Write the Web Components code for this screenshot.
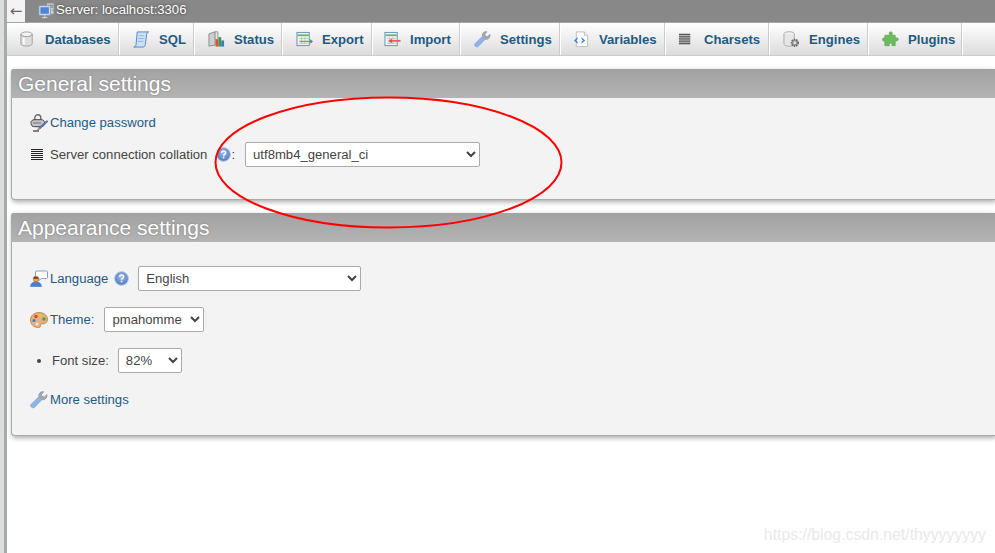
<!DOCTYPE html>
<html>
<head>
<meta charset="utf-8">
<title>phpMyAdmin</title>
<style>
html, body { margin: 0; height: 100%; background: #fff; overflow: hidden; }
body { font-family: "Liberation Sans", Arial, sans-serif; }
</style>
</head>
<body>

<pma-app>
  <pma-topbar slot="top" label="Server: localhost:3306"></pma-topbar>
  <pma-tabs slot="top">
    <pma-tab icon="db" w="113" style="padding-left:12px">Databases</pma-tab>
    <pma-tab icon="sql" w="75">SQL</pma-tab>
    <pma-tab icon="status" w="88">Status</pma-tab>
    <pma-tab icon="export" w="90">Export</pma-tab>
    <pma-tab icon="import" w="88" style="padding-left:11px">Import</pma-tab>
    <pma-tab icon="wrench" w="100">Settings</pma-tab>
    <pma-tab icon="vars" w="105" style="padding-left:12px">Variables</pma-tab>
    <pma-tab icon="charset" w="104" style="padding-left:12px">Charsets</pma-tab>
    <pma-tab icon="engine" w="99">Engines</pma-tab>
    <pma-tab icon="plugin" w="94">Plugins</pma-tab>
  </pma-tabs>

  <pma-panel title="General settings" h="131" pad="12">
    <pma-row icon="lock" link>Change password</pma-row>
    <pma-row icon="charset" gap="7">
      Server connection collation
      <pma-help slot="after" style="margin-left:9px;margin-right:1px"></pma-help>
      <span slot="after" class="colon">:</span>
      <pma-select slot="after" w="235" value="utf8mb4_general_ci"></pma-select>
    </pma-row>
  </pma-panel>

  <pma-panel title="Appearance settings" h="223" pad="24">
    <pma-row icon="lang" link>
      Language
      <pma-help slot="after"></pma-help>
      <pma-select slot="after" w="223" value="English"></pma-select>
    </pma-row>
    <pma-row icon="theme" link gap="16">
      Theme:
      <pma-select slot="after" w="100" value="pmahomme"></pma-select>
    </pma-row>
    <pma-row bullet gap="16">
      Font size:
      <pma-select slot="after" w="64" value="82%" style="margin-left:9px"></pma-select>
    </pma-row>
    <pma-row icon="wrench" link gap="14">More settings</pma-row>
  </pma-panel>

  <pma-annotation slot="over"></pma-annotation>
</pma-app>

<script>
const ICONS = {
  db: `<ellipse cx="8" cy="3.500" rx="6" ry="2.500" fill="#f2f2f2" stroke="#a0a0a0"/><path d="M2 3.500v10c0 1.500 2.600 2.500 6 2.500s6-1 6-2.500v-10c0 1.400-2.600 2.500-6 2.500S2 4.900 2 3.500z" fill="#dedede" stroke="#a0a0a0"/><path d="M5 7v7.500" stroke="#fff" stroke-width="2"/>`,
  sql: `<path d="M4.500 1h12c-1.200.3-1.800 1.200-2 2.500L13 14.500c-.2 1.500-1 2.500-2.500 2.500H.8c1.500-.3 2.200-1.200 2.400-2.500z" fill="#cfe0f5" stroke="#4d84c4"/><path d="M16.500 1c-1 0-2 .6-2.500 2.500M6 5h6M5.500 8h6M5 11h6" fill="none" stroke="#7fa6d6" stroke-width=".8"/>`,
  status: `<path d="M1 3l6.500-2.200V15L1 16z" fill="#cfcfcf" stroke="#8a8a8a"/><path d="M7.500 .8h3V9h-3z" fill="#e2e2e2" stroke="#999"/><rect x="8" y="9" width="3" height="7.500" fill="#e0503a"/><rect x="11" y="6.500" width="3" height="10" fill="#3f9b3f"/><rect x="14" y="10" width="3" height="6.500" fill="#3d78d0"/>`,
  export: `<rect x="1" y="1.500" width="13" height="14" fill="#eef5ea" stroke="#5f8fc6"/><path d="M1.500 4.500h12" stroke="#79b46a" stroke-width="2"/><path d="M3 8h10M3 10.500h10M3 13h10M6 6v8M9.500 6v8" stroke="#a7bfa0" stroke-width=".7"/><path d="M4 10.500h11V8.500l3 2.500-3 2.500v-2H4z" fill="#3f9b3f"/>`,
  import: `<rect x="1" y="1.500" width="13" height="14" fill="#f2f6fb" stroke="#5f8fc6"/><path d="M1.500 4.500h12" stroke="#79b46a" stroke-width="2"/><path d="M3 8h10M3 13h10M6 6v8M9.500 6v8" stroke="#a9b9c8" stroke-width=".7"/><path d="M17.500 9.500H8.500V8L4 10.500 8.500 13v-1.500h9z" fill="#e04a4a" stroke="#f6b3a9" stroke-width=".5"/>`,
  wrench: `<path d="M.8 13.500L9 5.500c-.6-2.300.9-4.800 3.600-4.800l1 .1-2.200 2.600.8 2.100 2.100.7L16.800 3.600c.6 3.100-1.700 5.600-4.800 5.100L4.500 16.500c-1.700 1.300-4.900-.8-3.700-3z" fill="#8fb2e8" stroke="#7d9ccf" stroke-width=".5"/><path d="M9 5.500c-.6-2.300.9-4.800 3.600-4.800l1 .1-2.200 2.600.8 2.100 2.100.7L16.800 3.600c.6 3.100-1.700 5.600-4.800 5.100z" fill="#a8a8a8" stroke="#919191" stroke-width=".4"/>`,
  vars: `<path d="M3.500 1h8.500l3.500 3.500v12h-12z" fill="#fff" stroke="#bbb"/><path d="M12 1v3.500h3.500" fill="#eee" stroke="#bbb"/><path d="M5 6.500L1 10l4 3.500v-2L3.200 10 5 8.500z" fill="#3d82e0"/><path d="M9 6.500L13 10l-4 3.500v-2L10.800 10 9 8.500z" fill="#3d82e0"/>`,
  charset: `<path d="M1 3.500h12M1 5.500h12M1 7.500h12M1 9.500h12M1 11.500h12M1 13.500h12" stroke="#222" stroke-width="1"/>`,
  engine: `<ellipse cx="6.500" cy="3.500" rx="5.500" ry="2.700" fill="#f2f2f2" stroke="#aaa"/><path d="M1 3.500v10c0 1.500 2.400 2.700 5.500 2.700s5.500-1.200 5.500-2.700v-10" fill="#e6e6e6" stroke="#aaa"/><circle cx="12.500" cy="12.500" r="3.500" fill="#9a9a9a" stroke="#666" stroke-width="1.800" stroke-dasharray="1.500 1"/><circle cx="12.500" cy="12.500" r="1.300" fill="#eee"/>`,
  plugin: `<path d="M5 4.500h3C7 2 8 .8 9.300 .8s2.200 1.300 1.200 3.700H14v3.200c2-.9 3.300-.2 3.300 1.100s-1.300 2.200-3.300 1.300V15.500H10.500c.6-1.800-.2-2.500-1.400-2.500S7.200 13.700 7.800 15.500H3V10.500C1.500 11 .5 10.200 .5 9s1-1.900 2.500-1.400V4.500z" fill="#6cbb5f" stroke="#4f9a44" stroke-width=".6"/>`,
  lock: `<path d="M4.800 6V3.800a3 3 0 0 1 6 0V6" fill="none" stroke="#6a6a6a" stroke-width="1.400"/><path d="M1 8.500c0-1.800 1.600-2.800 3.300-2.800h7c1.800 0 3.200 1 3.200 2.800v1c0 2-1.500 3.200-3.200 3.200h-7C2.600 12.700 1 11.500 1 9.500z" fill="#c4c4c4" stroke="#444"/><path d="M3.500 9h7" stroke="#222" stroke-dasharray="1 1"/><path d="M16.800 6.500L9 13.500 7.500 15.800l2.500-.8 8-7.500z" fill="#5d78c8" stroke="#3d4f9a" stroke-width=".5"/><path d="M9 13.500l-1.500 2.300 2.500-.8z" fill="#f0a030"/><path d="M3 17h6" stroke="#111"/>`,
  lang: `<path d="M6.500 1h10c.7 0 1 .4 1 1v5.500c0 .6-.3 1-1 1h-5L9 10.500v-2H6.500c-.7 0-1-.4-1-1V2c0-.6.3-1 1-1z" fill="#fff" stroke="#7ea3d2"/><circle cx="6" cy="9" r="2.800" fill="#eda55f" stroke="#a86a30" stroke-width=".5"/><path d="M.5 16.500c.3-3 2.300-4.700 5.500-4.700s5.200 1.700 5.500 4.700z" fill="#3f82da" stroke="#2f62a8" stroke-width=".5"/><path d="M4 11.800h4L6 14z" fill="#e0672f"/><path d="M3.200 7.800c.8-1.500 3.800-1.600 5.300.1L8 9 4 8.800z" fill="#7a3f17"/>`,
  theme: `<path d="M9 1.500c5 0 8.500 3 8.500 6.800 0 3.100-2.800 4.800-5 4.500-1.800-.2-2.400.7-2 1.900.3 1.100-.7 1.800-2.100 1.800C3.500 16.500.5 13.200.5 9 .5 4.800 4 1.500 9 1.500z" fill="#e6b07c" stroke="#a5713e" stroke-width=".7"/><circle cx="6" cy="5.500" r="1.700" fill="#d8473a"/><circle cx="10.500" cy="4.800" r="1.700" fill="#e8c93a"/><circle cx="14" cy="8" r="1.700" fill="#4aa04a"/><circle cx="4" cy="9.500" r="1.500" fill="#3d78d0"/><circle cx="7" cy="13" r="1.500" fill="#efe6da"/>`
};

function icon(name, size = 18) {
  return `<svg width="${size}" height="${size}" viewBox="0 0 18 18" style="display:block;flex:none">${ICONS[name] || ''}</svg>`;
}

function shadow(el, html) {
  el.attachShadow({ mode: 'open' }).innerHTML = html;
}

class PmaApp extends HTMLElement {
  constructor() {
    super();
    shadow(this, `
<style>
:host { display: grid; grid-template-columns: 7px 1fr; width: 995px; height: 553px; position: relative; overflow: hidden; background: #fff; }
.nav { background: linear-gradient(to right, #dcdddd 0 4px, #a9a9a9 4px 7px); }
.main { min-width: 0; display: flex; flex-direction: column; }
.content { padding: 13px 0 0 4px; display: flex; flex-direction: column; gap: 13px; }
</style>
<div class="nav"></div>
<div class="main">
  <slot name="top"></slot>
  <div class="content"><slot></slot></div>
</div>
<slot name="over"></slot>`);
  }
}

class PmaTopbar extends HTMLElement {
  constructor() {
    super();
    shadow(this, `
<style>
:host { display: flex; align-items: center; height: 22px; background: #888; border-bottom: 1px solid #a5a5a5; color: #fff; font-size: 13.12px; }
.back { width: 18px; height: 22px; background: #f3f3f3; color: #666; display: flex; align-items: center; justify-content: center; font: 15px/1 "DejaVu Sans", sans-serif; }
.ico { margin: -2px 1px 0 13px; }
.label { text-shadow: 0 0 3px #333; margin-top: -3px; }
</style>
<span class="back">←</span>
<svg class="ico" width="17" height="17" viewBox="0 0 18 18">
  <rect x="9" y="1" width="8" height="12" fill="#cfcfcf" stroke="#8a8a8a"/>
  <path d="M11 3.500h5M11 5.500h5" stroke="#777"/>
  <rect x="15" y="8" width="1.500" height="1.500" fill="#4fc04f"/>
  <rect x="1" y="4" width="12" height="10" fill="#e4e9f2" stroke="#8b98ad"/>
  <rect x="2.500" y="5.500" width="9" height="7" fill="#4d86d6"/>
  <path d="M4 16.500h6M7 14v2.500" stroke="#ccc" stroke-width="1.400"/>
</svg>
<span class="label"></span>`);
  }
  connectedCallback() {
    this.shadowRoot.querySelector('.label').textContent = this.getAttribute('label');
  }
}

class PmaTabs extends HTMLElement {
  constructor() {
    super();
    shadow(this, `
<style>
:host { display: flex; height: 32px; background: linear-gradient(#fff, #dcdcdc); border-bottom: 1px solid #ccc; }
</style>
<slot></slot>`);
  }
}

class PmaTab extends HTMLElement {
  constructor() {
    super();
    shadow(this, `
<style>
:host { display: flex; align-items: center; height: 32px; box-sizing: border-box; border-right: 1px solid #fff; box-shadow: inset -1px 0 0 #ccc; padding-left: 13px; font-size: 13.12px; font-weight: bold; color: #235a81; flex: none; }
.i { width: 17px; margin-right: 9px; }
</style>
<span class="i"></span><slot></slot>`);
  }
  connectedCallback() {
    this.style.width = this.getAttribute('w') + 'px';
    this.shadowRoot.querySelector('.i').innerHTML = icon(this.getAttribute('icon'), 17);
  }
}

class PmaPanel extends HTMLElement {
  constructor() {
    super();
    shadow(this, `
<style>
:host { display: block; background: #f3f3f3; border: 1px solid #aaa; border-right: 0; border-radius: 4px 0 0 4px; box-shadow: 1px 2px 5px #aaa; box-sizing: border-box; }
h2 { height: 29px; padding-left: 7px; background: linear-gradient(#a2a2a2, #b4b4b4); color: #fff; font-size: 21px; font-weight: normal; line-height: 29px; text-shadow: 0 0 2px #777; border-radius: 3px 0 0 0; margin: -1px 0 0 -1px; }
.body { display: flex; flex-direction: column; padding-left: 18px; }
</style>
<h2></h2><div class="body"><slot></slot></div>`);
  }
  connectedCallback() {
    this.shadowRoot.querySelector('h2').textContent = this.getAttribute('title');
    this.removeAttribute('title');
    this.style.height = this.getAttribute('h') + 'px';
    this.shadowRoot.querySelector('.body').style.paddingTop = this.getAttribute('pad') + 'px';
  }
}

class PmaRow extends HTMLElement {
  constructor() {
    super();
    shadow(this, `
<style>
:host { display: flex; align-items: center; height: 25px; font-size: 13.12px; color: #444; white-space: nowrap; }
:host([link]) { color: #235a81; }
.i { width: 18px; margin-right: 2px; display: flex; }
.b { width: 4px; height: 4px; border-radius: 50%; background: #444; margin: 0 11px 0 7px; }
.after { display: flex; align-items: center; }
::slotted(.colon) { color: #444; }
</style>
<span class="i"></span><slot></slot><span class="after"><slot name="after"></slot></span>`);
  }
  connectedCallback() {
    const i = this.shadowRoot.querySelector('.i');
    if (this.hasAttribute('bullet')) i.className = 'b';
    else i.innerHTML = icon(this.getAttribute('icon'), 18);
    if (this.hasAttribute('gap')) this.style.marginTop = this.getAttribute('gap') + 'px';
  }
}

class PmaHelp extends HTMLElement {
  constructor() {
    super();
    shadow(this, `
<style>
:host { display: block; flex: none; margin-left: 6px; width: 14px; height: 15px; }
</style>
<svg width="15" height="15" viewBox="0 0 15 15" style="display:block">
  <defs><radialGradient id="g" cx=".5" cy=".4" r=".6"><stop offset="0" stop-color="#9cbbe6"/><stop offset="1" stop-color="#4f79bd"/></radialGradient></defs>
  <circle cx="7.500" cy="7.500" r="6.800" fill="url(#g)" stroke="#a9bfdf"/>
  <path d="M5.500 5.800c.2-1.300 1-1.800 2-1.800 1.300 0 2.100.8 2.100 1.800 0 1.500-2 1.500-2 3" fill="none" stroke="#fff" stroke-width="1.500"/>
  <rect x="6.800" y="9.800" width="1.500" height="1.500" fill="#fff"/>
</svg>`);
  }
}

class PmaSelect extends HTMLElement {
  constructor() {
    super();
    shadow(this, `
<style>
:host { display: block; flex: none; margin-left: 10px; }
select { display: block; width: 100%; height: 25px; box-sizing: border-box; padding: 0 0 0 3px; background: #fff; color: #444; border: 1px solid #aaa; border-radius: 2px; font: 13.12px "Liberation Sans", Arial, sans-serif; }
</style>
<select><option></option></select>`);
  }
  connectedCallback() {
    this.style.width = this.getAttribute('w') + 'px';
    this.shadowRoot.querySelector('option').textContent = this.getAttribute('value');
  }
}

class PmaAnnotation extends HTMLElement {
  constructor() {
    super();
    shadow(this, `
<style>
:host { position: absolute; inset: 0; pointer-events: none; }
svg { position: absolute; left: 0; top: 0; }
.mark { position: absolute; right: 9px; top: 526px; font-size: 15.8px; color: #e9e9e9; white-space: nowrap; }
</style>
<svg width="995" height="553"><ellipse cx="388.500" cy="162.500" rx="173" ry="65" fill="none" stroke="#f00" stroke-width="2"/></svg>
<span class="mark">https://blog.csdn.net/thyyyyyyyy</span>`);
  }
}

customElements.define('pma-app', PmaApp);
customElements.define('pma-topbar', PmaTopbar);
customElements.define('pma-tabs', PmaTabs);
customElements.define('pma-tab', PmaTab);
customElements.define('pma-panel', PmaPanel);
customElements.define('pma-row', PmaRow);
customElements.define('pma-help', PmaHelp);
customElements.define('pma-select', PmaSelect);
customElements.define('pma-annotation', PmaAnnotation);
</script>
</body>
</html>
